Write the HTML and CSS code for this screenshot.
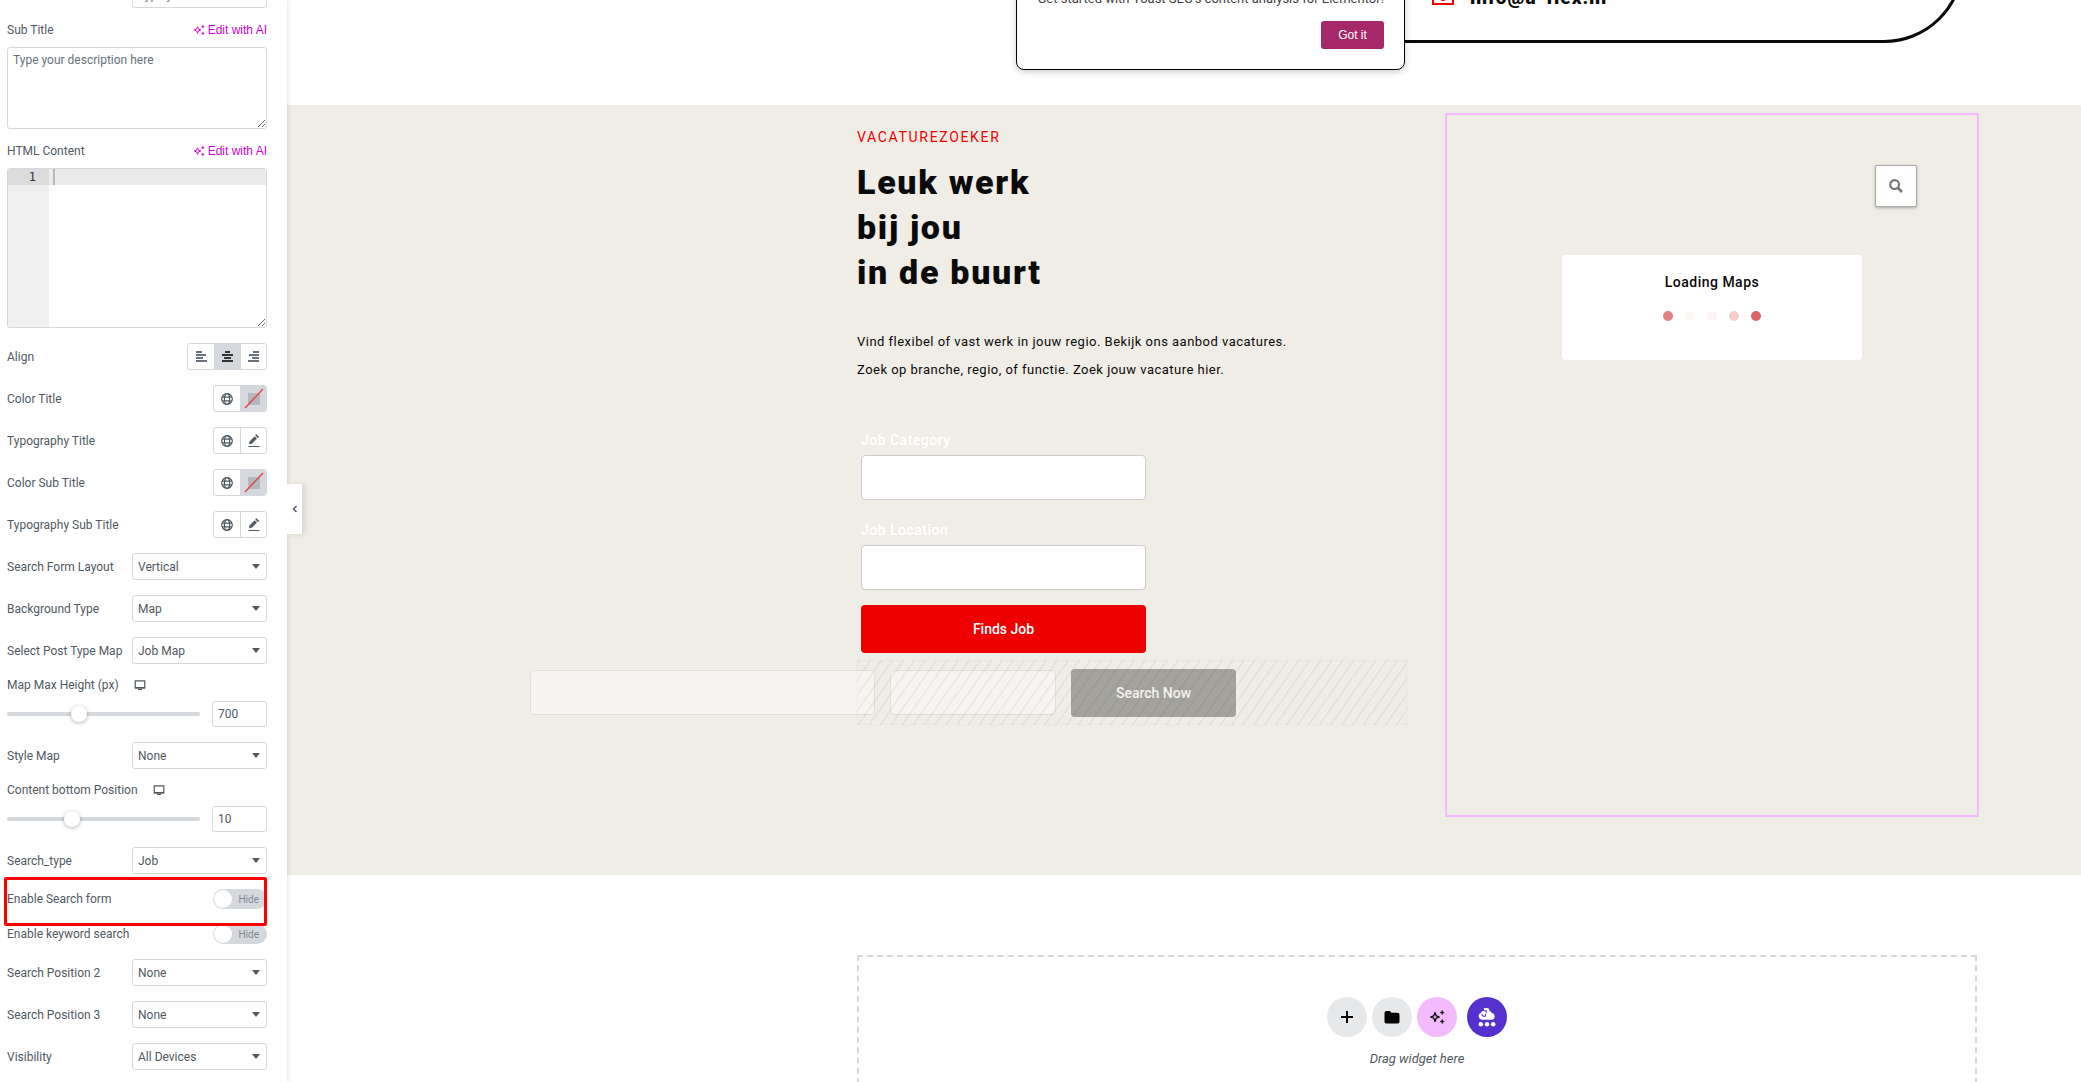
FILE: index.html
```
<!DOCTYPE html>
<html lang="nl">

<head>
	<meta charset="utf-8">
	<meta name="viewport" content="width=device-width, initial-scale=1">
	<title>Elementor</title>
	<link rel="stylesheet" href="styles.css">
</head>

<body>
	<svg class="symbols" aria-hidden="true">
		<symbol id="sparkles" viewBox="0 0 16 16">
			<path d="M6 3.6L7.2 6.8L10.4 8L7.2 9.2L6 12.4L4.8 9.2L1.6 8L4.8 6.8z" fill="none" stroke="currentColor" stroke-width="1.3" stroke-linejoin="round"></path>
			<path d="M13.2 1.5l.6 1.4l1.4.6l-1.4.6l-.6 1.4l-.6-1.4l-1.4-.6l1.4-.6zM13.2 10.5l.6 1.4l1.4.6l-1.4.6l-.6 1.4l-.6-1.4l-1.4-.6l1.4-.6z" fill="currentColor" stroke="currentColor" stroke-width=".6"></path>
		</symbol>
		<symbol id="globe" viewBox="0 0 12 12">
			<g fill="none" stroke="currentColor" stroke-width="1.2">
				<circle cx="6" cy="6" r="5.3"></circle>
				<ellipse cx="6" cy="6" rx="2.6" ry="5.3"></ellipse>
				<path d="M1.2 4.2h9.6M1.2 7.8h9.6"></path>
			</g>
		</symbol>
		<symbol id="pencil" viewBox="0 0 12 14">
			<path d="M1 10.2l.5-2.8l5.2-5.2l2.3 2.3l-5.2 5.2zM7.4 1.5l.5-.5l-.5-.5l.6-.5l3.4 3l-.8.8l-.4-.4l-.5.6z" fill="currentColor"></path>
			<path d="M.5 12.5h11" stroke="currentColor" stroke-width="1"></path>
		</symbol>
		<symbol id="desktop" viewBox="0 0 12 11">
			<path d="M1.2 .8h9.6v7H1.2z" fill="none" stroke="currentColor" stroke-width="1.2"></path>
			<path d="M1 7h10v1.4H1zM4 9h4v1H4z" fill="currentColor"></path>
		</symbol>
	</svg>

	<aside class="panel">
		<div class="control control-cut">
			<label for="title">Title</label>
			<input id="title" class="field" type="text" placeholder="Type your title here">
		</div>
		<div class="control-block">
			<div class="block-head">
				<label for="sub-title">Sub Title</label>
				<button class="ai-button"><svg><use href="#sparkles"></use></svg>Edit with AI</button>
			</div>
			<textarea id="sub-title" class="description" placeholder="Type your description here"></textarea>
		</div>
		<div class="control-block">
			<div class="block-head">
				<label for="html-content">HTML Content</label>
				<button class="ai-button"><svg><use href="#sparkles"></use></svg>Edit with AI</button>
			</div>
			<div class="editor">
				<div class="gutter"><div class="line-number">1</div></div>
				<textarea id="html-content" class="code"></textarea>
				<span class="cursor"></span>
			</div>
		</div>
		<div class="control">
			<span>Align</span>
			<div class="choices">
				<button aria-label="Left"><svg class="align-icon" viewBox="0 0 11 11"><path d="M0 1h6M0 4h10M0 7h7M0 10h11"></path></svg></button>
				<button class="active" aria-label="Center"><svg class="align-icon" viewBox="0 0 11 11"><path d="M3 1h5M0 4h11M2 7h7M0 10h11"></path></svg></button>
				<button aria-label="Right"><svg class="align-icon" viewBox="0 0 11 11"><path d="M5 1h6M1 4h10M4 7h7M0 10h11"></path></svg></button>
			</div>
		</div>
		<div class="control">
			<span>Color Title</span>
			<div class="choices">
				<button aria-label="Global color"><svg class="globe-icon"><use href="#globe"></use></svg></button>
				<button class="active" aria-label="Pick color"><svg class="swatch" viewBox="0 0 26 25"><path d="M7 7h12v12H7z" fill="#b4b7bb"></path><path d="M4 22L22 3" stroke="#e5484d" stroke-width="1.5"></path></svg></button>
			</div>
		</div>
		<div class="control">
			<span>Typography Title</span>
			<div class="choices">
				<button aria-label="Global font"><svg class="globe-icon"><use href="#globe"></use></svg></button>
				<button aria-label="Edit font"><svg class="pencil-icon"><use href="#pencil"></use></svg></button>
			</div>
		</div>
		<div class="control">
			<span>Color Sub Title</span>
			<div class="choices">
				<button aria-label="Global color"><svg class="globe-icon"><use href="#globe"></use></svg></button>
				<button class="active" aria-label="Pick color"><svg class="swatch" viewBox="0 0 26 25"><path d="M7 7h12v12H7z" fill="#b4b7bb"></path><path d="M4 22L22 3" stroke="#e5484d" stroke-width="1.5"></path></svg></button>
			</div>
		</div>
		<div class="control">
			<span>Typography Sub Title</span>
			<div class="choices">
				<button aria-label="Global font"><svg class="globe-icon"><use href="#globe"></use></svg></button>
				<button aria-label="Edit font"><svg class="pencil-icon"><use href="#pencil"></use></svg></button>
			</div>
		</div>
		<div class="control">
			<label for="form-layout">Search Form Layout</label>
			<div class="select"><select id="form-layout" class="field"><option>Vertical</option></select></div>
		</div>
		<div class="control">
			<label for="background-type">Background Type</label>
			<div class="select"><select id="background-type" class="field"><option>Map</option></select></div>
		</div>
		<div class="control">
			<label for="post-type">Select Post Type Map</label>
			<div class="select"><select id="post-type" class="field"><option>Job Map</option></select></div>
		</div>
		<div class="control-slider">
			<div class="slider-head">
				<label for="max-height">Map Max Height (px)</label>
				<svg class="desktop-icon"><use href="#desktop"></use></svg>
			</div>
			<div class="slider-row">
				<input type="range" min="0" max="1940" value="700" aria-label="Map Max Height">
				<input id="max-height" class="field" type="text" value="700">
			</div>
		</div>
		<div class="control">
			<label for="style-map">Style Map</label>
			<div class="select"><select id="style-map" class="field"><option>None</option></select></div>
		</div>
		<div class="control-slider">
			<div class="slider-head">
				<label for="bottom-position">Content bottom Position</label>
				<svg class="desktop-icon"><use href="#desktop"></use></svg>
			</div>
			<div class="slider-row">
				<input type="range" min="0" max="31" value="10" aria-label="Content bottom Position">
				<input id="bottom-position" class="field" type="text" value="10">
			</div>
		</div>
		<div class="control">
			<label for="search-type">Search_type</label>
			<div class="select"><select id="search-type" class="field"><option>Job</option></select></div>
		</div>
		<div class="control control-switch marked">
			<label for="enable-form">Enable Search form</label>
			<label class="switch"><input id="enable-form" type="checkbox"><span>Hide</span></label>
		</div>
		<div class="control control-switch">
			<label for="enable-keyword">Enable keyword search</label>
			<label class="switch"><input id="enable-keyword" type="checkbox"><span>Hide</span></label>
		</div>
		<div class="control">
			<label for="position-2">Search Position 2</label>
			<div class="select"><select id="position-2" class="field"><option>None</option></select></div>
		</div>
		<div class="control">
			<label for="position-3">Search Position 3</label>
			<div class="select"><select id="position-3" class="field"><option>None</option></select></div>
		</div>
		<div class="control">
			<label for="visibility">Visibility</label>
			<div class="select"><select id="visibility" class="field"><option>All Devices</option></select></div>
		</div>
		<button class="panel-toggle" aria-label="Hide panel"><svg viewBox="0 0 6 8"><path d="M4.5 1L1.5 4L4.5 7" fill="none" stroke="#515962" stroke-width="1.5"></path></svg></button>
	</aside>

	<main class="preview">
		<section class="contact">
			<div class="contact-card">
				<svg class="mail-icon" viewBox="0 0 22 20"><path d="M1 1h20v18H1z" fill="none" stroke="#e00" stroke-width="2"></path><path d="M8 13a3 3 0 0 0 6 0" fill="#e00"></path></svg>
				<a href="mailto:info@a-flex.nl">info@a-flex.nl</a>
			</div>
			<div class="popover">
				<p>Get started with Yoast SEO's content analysis for Elementor!</p>
				<button>Got it</button>
			</div>
		</section>

		<section class="finder">
			<div class="intro">
				<p class="kicker">VACATUREZOEKER</p>
				<h2>Leuk werk<br>bij jou<br>in de buurt</h2>
				<p class="lead">Vind flexibel of vast werk in jouw regio. Bekijk ons aanbod vacatures.<br>Zoek op branche, regio, of functie. Zoek jouw vacature hier.</p>
				<form class="job-form">
					<label for="job-category">Job Category</label>
					<input id="job-category" type="text">
					<label for="job-location">Job Location</label>
					<input id="job-location" type="text">
					<button type="button">Finds Job</button>
				</form>
				<div class="hidden-widget">
					<form class="quick-form">
						<input class="wide" type="text" aria-label="Keyword">
						<input type="text" aria-label="Location">
						<button type="button">Search Now</button>
					</form>
				</div>
			</div>
			<div class="map">
				<button class="map-search" aria-label="Search"><svg viewBox="0 0 14 14"><circle cx="5.6" cy="5.6" r="4.4" fill="none" stroke="#757575" stroke-width="2.2"></circle><path d="M9 9l4 4" stroke="#757575" stroke-width="2.6"></path></svg></button>
				<div class="loader">
					<p>Loading Maps</p>
					<div class="dots"><i></i><i></i><i></i><i></i><i></i></div>
				</div>
			</div>
		</section>

		<section class="add-section">
			<div class="drop-area">
				<div class="add-buttons">
					<button aria-label="Add"><svg viewBox="0 0 20 20"><path d="M10 4v12M4 10h12" stroke="#000" stroke-width="2"></path></svg></button>
					<button aria-label="Templates"><svg viewBox="0 0 20 20"><path d="M2.5 6a2 2 0 0 1 2-2h3.2l1.8 1.8h6a2 2 0 0 1 2 2V14.5a2 2 0 0 1-2 2h-11a2 2 0 0 1-2-2z"></path></svg></button>
					<button class="ai" aria-label="AI"><svg class="small"><use href="#sparkles"></use></svg></button>
					<button class="kit" aria-label="Kit library"><svg viewBox="0 0 20 22"><g fill="#fff"><path d="M4.6 14a3.9 3.9 0 0 1-1.6-7.4a4 4 0 0 1 3.6-2.6V1.2h3.6a3 3 0 0 1 2.6 3.2a3.4 3.4 0 0 1 2.6 2.2a3.8 3.8 0 0 1 .4 7.4z"></path><circle cx="3.2" cy="19" r="2.5"></circle><circle cx="10" cy="19" r="2.5"></circle><circle cx="16.8" cy="19" r="2.5"></circle></g><path d="M6.6 4.2h2.6v2M4.6 7.5a2.4 2.4 0 0 0 3.8 2.3V7.4" fill="none" stroke="#5630cc" stroke-width="1.2"></path></svg></button>
				</div>
				<p>Drag widget here</p>
			</div>
		</section>
	</main>
</body>

</html>
```
FILE: styles.css
```
* {
	box-sizing: border-box;
}

body {
	color: #0a0a0a;
	display: flex;
	font-family: Roboto, sans-serif;
	height: 100vh;
	margin: 0;
	overflow: hidden;
}

button, input, select, textarea {
	font-family: inherit;
	margin: 0;
}

button {
	cursor: pointer;
}

p, h2 {
	margin: 0;
}

.symbols {
	height: 0;
	position: absolute;
	width: 0;
}

/* left panel */

.panel {
	background-color: #fff;
	box-shadow: 0 0 5px rgba(0, 0, 0, 0.15);
	color: #515962;
	display: flex;
	flex: none;
	flex-direction: column;
	font-size: 12px;
	gap: 15px;
	padding: 0 20px 0 7px;
	position: relative;
	width: 287px;
	z-index: 2;
}

.panel > * {
	flex-shrink: 0;
}

.control {
	align-items: center;
	display: flex;
	height: 27px;
	justify-content: space-between;
	position: relative;
}

.control-cut {
	margin-top: -19px;
}

.field {
	appearance: none;
	background-color: #fff;
	border: 1px solid #d5d8dc;
	border-radius: 3px;
	color: #515962;
	font-size: 12px;
	height: 27px;
	outline: none;
	padding: 0 5px;
	width: 135px;
}

.field::placeholder, .description::placeholder {
	color: #69727d;
}

.select {
	position: relative;
}

.select::after {
	border: 4px solid transparent;
	border-bottom: 0;
	border-top: 5px solid #515962;
	content: "";
	pointer-events: none;
	position: absolute;
	right: 7px;
	top: 11px;
}

.block-head {
	align-items: center;
	display: flex;
	height: 14px;
	justify-content: space-between;
	margin-bottom: 10px;
}

.ai-button {
	align-items: center;
	background: none;
	border: 0;
	color: #d004d4;
	display: flex;
	font-family: "Liberation Sans", Arial, sans-serif;
	font-size: 12px;
	gap: 3px;
	padding: 0;
}

.ai-button svg {
	height: 12px;
	width: 12px;
}

.description {
	border: 1px solid #d5d8dc;
	border-radius: 3px;
	display: block;
	font-size: 12px;
	height: 82px;
	padding: 5px;
	resize: vertical;
	width: 100%;
}

.editor {
	border: 1px solid #d5d8dc;
	border-radius: 3px;
	display: flex;
	height: 160px;
	overflow: hidden;
	position: relative;
}

.gutter {
	background-color: #f0f0f0;
	width: 41px;
}

.line-number {
	background-color: #dcdcdc;
	color: #333;
	font-family: "DejaVu Sans Mono", monospace;
	font-size: 12px;
	height: 16px;
	line-height: 16px;
	padding-right: 13px;
	text-align: right;
}

.code {
	background: linear-gradient(#ebebeb, #ebebeb) no-repeat 0 0 / 100% 16px;
	border: 0;
	flex: 1;
	font-family: "DejaVu Sans Mono", monospace;
	font-size: 12px;
	min-width: 0;
	outline: none;
	padding: 0 4px;
	resize: vertical;
}

.cursor {
	background-color: #b8b8b8;
	height: 16px;
	left: 45px;
	position: absolute;
	top: 0;
	width: 2px;
}

.choices {
	border: 1px solid #d5d8dc;
	border-radius: 3px;
	display: flex;
	height: 27px;
	overflow: hidden;
}

.choices button {
	align-items: center;
	background: none;
	border: 0;
	color: #515962;
	display: flex;
	justify-content: center;
	padding: 0;
	width: 26px;
}

.choices button + button {
	border-left: 1px solid #d5d8dc;
}

.choices button.active {
	background-color: #d5d8dc;
}

.align-icon {
	height: 11px;
	stroke: #69727d;
	stroke-width: 2;
	width: 11px;
}

.active .align-icon {
	stroke: #333;
}

.globe-icon {
	height: 12px;
	width: 12px;
}

.pencil-icon {
	height: 14px;
	width: 12px;
}

.swatch {
	flex: none;
	height: 25px;
	width: 26px;
}

.slider-head {
	align-items: center;
	display: flex;
	gap: 15px;
	height: 12px;
	margin-bottom: 10px;
}

.desktop-icon {
	height: 11px;
	width: 12px;
}

.slider-row {
	align-items: center;
	display: flex;
	justify-content: space-between;
}

.slider-row .field {
	height: 26px;
	width: 55px;
}

input[type="range"] {
	appearance: none;
	background-color: #d5d8dc;
	border-radius: 2px;
	height: 4px;
	width: 193px;
}

input[type="range"]::-webkit-slider-thumb {
	appearance: none;
	background-color: #fff;
	border-radius: 50%;
	box-shadow: 0 1px 4px rgba(0, 0, 0, 0.3);
	height: 16px;
	width: 16px;
}

.control-switch {
	height: 20px;
}

.marked::after {
	border: 3px solid #f00;
	border-radius: 2px;
	bottom: -17px;
	content: "";
	left: -3px;
	pointer-events: none;
	position: absolute;
	right: 0;
	top: -12px;
	z-index: 1;
}

.switch {
	align-items: center;
	background-color: #d5d8dc;
	border-radius: 10px;
	color: #818a96;
	display: flex;
	font-size: 10px;
	height: 20px;
	padding: 1px 8px 1px 1px;
	width: 54px;
}

.switch input {
	appearance: none;
	background-color: #fff;
	border-radius: 50%;
	height: 18px;
	width: 18px;
}

.switch span {
	flex: 1;
	text-align: right;
}

.panel-toggle {
	align-items: center;
	background-color: #fff;
	border: 0;
	box-shadow: 3px 1px 5px rgba(0, 0, 0, 0.1);
	display: flex;
	height: 50px;
	justify-content: center;
	left: 100%;
	padding: 0;
	position: absolute;
	top: 484px;
	width: 15px;
}

.panel-toggle svg {
	height: 8px;
	width: 6px;
}

/* page preview */

.preview {
	display: flex;
	flex: 1;
	flex-direction: column;
	min-width: 0;
}

.contact {
	display: flex;
	flex: none;
	flex-direction: column;
	height: 105px;
	justify-content: flex-end;
	padding: 0 117px 62px 760px;
	position: relative;
}

.contact-card {
	align-items: flex-end;
	border: 3px solid #0a0a0a;
	border-radius: 0 80px 80px 0;
	display: flex;
	flex: none;
	gap: 16px;
	height: 160px;
	padding: 0 0 33px 382px;
}

.mail-icon {
	height: 20px;
	margin-bottom: 2px;
	width: 22px;
}

.contact-card a {
	color: #0a0a0a;
	font-size: 19px;
	font-weight: 900;
	letter-spacing: 1px;
	line-height: 18px;
	text-decoration: none;
}

.popover {
	background-color: #fff;
	border: 1px solid #000;
	border-radius: 8px;
	bottom: 35px;
	box-shadow: 0 2px 6px rgba(0, 0, 0, 0.2);
	color: #404040;
	font-size: 13px;
	left: 729px;
	line-height: 20px;
	padding: 20px;
	position: absolute;
	text-align: right;
	white-space: nowrap;
	width: 389px;
}

.popover button {
	background-color: #a4286a;
	border: 0;
	border-radius: 3px;
	color: #fff;
	font-family: "Liberation Sans", Arial, sans-serif;
	font-size: 12px;
	height: 28px;
	margin-top: 12px;
	width: 63px;
}

.popover button, .popover p {
	display: block;
	margin-left: auto;
}

.finder {
	background-color: #f0ede6;
	display: flex;
	flex: none;
	gap: 38px;
	height: 770px;
	letter-spacing: 0.03em;
	padding: 8px 102px 58px 568px;
}

.intro {
	flex: 1;
	min-width: 0;
	padding: 16px 0 0 2px;
}

.kicker {
	color: #e00;
	font-size: 14px;
	letter-spacing: 0.12em;
	line-height: 16px;
}

h2 {
	font-size: 34px;
	font-weight: 900;
	letter-spacing: 0.05em;
	line-height: 45px;
	margin-top: 15px;
}

.lead {
	font-size: 13px;
	line-height: 28px;
	margin-top: 33px;
}

.job-form {
	display: flex;
	flex-direction: column;
	margin-top: 46px;
	padding-left: 4px;
	width: 289px;
}

.job-form label {
	color: #fff;
	font-size: 14px;
	font-weight: 500;
	line-height: 20px;
	margin-bottom: 5px;
}

.job-form input {
	background-color: #fff;
	border: 1px solid #ccc;
	border-radius: 4px;
	height: 45px;
	margin-bottom: 20px;
}

.job-form button, .quick-form button {
	background-color: #e00;
	border: 0;
	border-radius: 4px;
	color: #fff;
	font-size: 14px;
	font-weight: 500;
	height: 48px;
}

.job-form input + button {
	margin-top: -5px;
}

.hidden-widget {
	display: flex;
	height: 65px;
	margin-top: 7px;
	position: relative;
	width: 550px;
}

.hidden-widget::after {
	background: repeating-linear-gradient(125deg, rgba(0, 0, 0, 0.05), rgba(0, 0, 0, 0.05) 1px, transparent 2px, transparent 9px);
	border: 1px solid rgba(0, 0, 0, 0.02);
	content: "";
	inset: 0;
	pointer-events: none;
	position: absolute;
}

.quick-form {
	align-items: center;
	display: flex;
	flex: none;
	gap: 15px;
	margin-left: -327px;
	opacity: 0.4;
	width: 706px;
}

.quick-form input {
	background-color: #fff;
	border: 1px solid #ccc;
	border-radius: 4px;
	height: 45px;
	width: 166px;
}

.quick-form .wide {
	flex: 1;
}

.quick-form button {
	background-color: #333;
	width: 165px;
}

.map {
	align-items: center;
	border: 2px solid #f3bafd;
	display: flex;
	flex: 1;
	flex-direction: column;
	max-width: 534px;
	padding: 50px 60px 0;
}

.map-search {
	align-items: center;
	align-self: flex-end;
	background-color: #fff;
	border: 1px solid #aaa;
	border-radius: 2px;
	box-shadow: 0 1px 3px rgba(0, 0, 0, 0.3);
	display: flex;
	height: 42px;
	justify-content: center;
	padding: 0;
	width: 42px;
}

.map-search svg {
	height: 14px;
	width: 14px;
}

.loader {
	background-color: #fff;
	border-radius: 4px;
	height: 105px;
	margin-top: 48px;
	padding-top: 17px;
	text-align: center;
	width: 300px;
}

.loader p {
	font-size: 14px;
	font-weight: 500;
	line-height: 20px;
}

.dots {
	display: flex;
	gap: 12px;
	justify-content: center;
	margin-top: 19px;
}

.dots i {
	background-color: #d96666;
	border-radius: 50%;
	height: 10px;
	width: 10px;
}

.dots i:nth-child(1) { background-color: #de8282; }
.dots i:nth-child(2) { background-color: #fef5f5; }
.dots i:nth-child(3) { background-color: #fdf4f4; }
.dots i:nth-child(4) { background-color: #f2cccc; }

.add-section {
	flex: 1;
	min-height: 0;
	padding: 80px 104px 0 570px;
}

.drop-area {
	align-items: center;
	border: 2px dashed #d5d8dc;
	display: flex;
	flex-direction: column;
	height: 170px;
	padding-top: 40px;
}

.add-buttons {
	display: flex;
	gap: 5px;
}

.add-buttons button {
	align-items: center;
	background-color: #e6e8ea;
	border: 0;
	border-radius: 50%;
	display: flex;
	height: 40px;
	justify-content: center;
	padding: 0;
	width: 40px;
}

.add-buttons svg {
	height: 20px;
	width: 20px;
}

.add-buttons .ai {
	background-color: #f3bafd;
}

.add-buttons .small {
	height: 16px;
	width: 16px;
}

.add-buttons .kit {
	background-color: #5630cc;
	margin-left: 5px;
}

.drop-area p {
	color: #515962;
	font-size: 13px;
	font-style: italic;
	line-height: 20px;
	margin-top: 12px;
}
```
